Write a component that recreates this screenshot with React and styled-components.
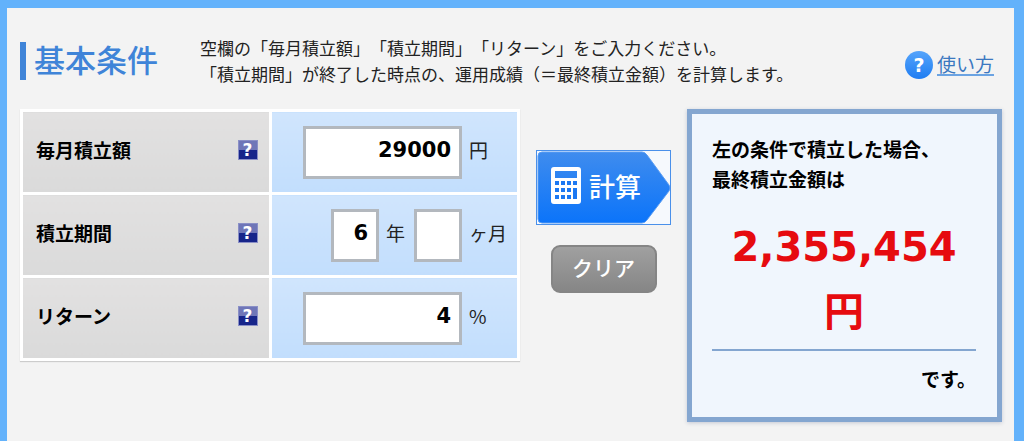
import React, { useState } from 'react';
import styled, { createGlobalStyle, ThemeProvider } from 'styled-components';

const theme = {
	brand: '#63b2fb',
	heading: '#3f84d8',
	line: '#84a6d0',
	danger: '#e60b0f',
	text: '#222',
	jp: '"Noto Sans CJK JP", sans-serif',
	digits: '"DejaVu Sans", "Noto Sans CJK JP", sans-serif',
};

const GlobalStyle = createGlobalStyle`
	*,
	*::before,
	*::after {
		box-sizing: border-box;
	}

	body {
		margin: 0;
		background: ${theme.brand};
		color: ${theme.text};
		font-family: ${theme.jp};
		text-spacing-trim: space-all;
	}

	button,
	input {
		font-family: inherit;
		text-spacing-trim: inherit;
	}
`;

const Page = styled.div`
	display: flex;
	min-height: 100vh;
	padding: 8px 10px 0 7px;
`;

const Panel = styled.main`
	flex: 1;
	min-width: 0;
	padding: 27px 12px 20px 13px;
	background: #f3f3f3;
`;

const Header = styled.header`
	display: flex;
	align-items: center;
	gap: 42px;
	margin-bottom: 22px;
`;

const Title = styled.h1`
	margin: 0;
	padding: 0 0 4px 8px;
	border-left: 6px solid ${props => props.theme.heading};
	color: ${props => props.theme.heading};
	font-size: 31px;
	font-weight: 500;
	line-height: 34px;
	white-space: nowrap;
`;

const Lead = styled.p`
	flex: 1;
	margin: 0;
	font-size: 17px;
	line-height: 26px;
`;

const HelpLink = styled.a`
	display: flex;
	align-items: center;
	gap: 4px;
	padding: 8px 8px 0 0;
	color: #3b78c0;
	font-size: 19px;
	line-height: 28px;
	text-decoration: none;
`;

const HelpBadge = styled.span`
	width: 28px;
	border-radius: 50%;
	background: linear-gradient(#55a4fb, #1f7df2);
	color: #fff;
	font-family: ${props => props.theme.digits};
	font-size: 19px;
	font-weight: 700;
	text-align: center;
`;

const HelpText = styled.span`
	line-height: 20px;
	border-bottom: 2px solid #6ba3e2;
`;

const Columns = styled.form`
	display: grid;
	grid-template-columns: minmax(0, 1fr) 135px 315px;
	gap: 16px;
	align-items: start;
`;

const Conditions = styled.table`
	width: 100%;
	border-collapse: collapse;
	table-layout: fixed;
	box-shadow: 0 1px 1px #ccc;
`;

const cell = `
	height: 83px;
	padding: 0;
	border: 3px solid #fff;
`;

const LabelCell = styled.th`
	${cell}
	background: linear-gradient(#e2e1e1, #dadada);
	text-align: left;
`;

const ValueCell = styled.td`
	${cell}
	background: linear-gradient(#d0e5fd, #c2defd);
`;

const LabelRow = styled.div`
	display: flex;
	align-items: center;
	justify-content: space-between;
	padding: 0 11px 4px 13px;
	color: #000;
	font-size: 19px;
	line-height: 30px;
`;

const HintButton = styled.button`
	width: 20px;
	height: 20px;
	padding: 0;
	border: 1px solid #8a8fc6;
	background: linear-gradient(#6f76b8 50%, #17258a 50%);
	color: #fff;
	font-family: ${props => props.theme.digits};
	font-size: 17px;
	font-weight: 700;
	line-height: 18px;
`;

const Fields = styled.div`
	display: flex;
	align-items: center;
	justify-content: flex-end;
`;

const NumberInput = styled.input`
	width: ${props => (props.$short ? 48 : 159)}px;
	height: 53px;
	padding: 0 8px 4px;
	border: 3px solid #b3b8be;
	border-radius: 0;
	background: #fff;
	color: #000;
	font-family: ${props => props.theme.digits};
	font-size: 21px;
	font-weight: 700;
	text-align: right;
	outline: none;
`;

const Unit = styled.span`
	width: ${props => (props.$inner ? 35 : 55)}px;
	padding: 0 0 4px 7px;
	font-size: 19px;
	line-height: 30px;
	white-space: nowrap;
`;

const Actions = styled.div`
	display: flex;
	flex-direction: column;
	align-items: center;
	gap: 20px;
	padding-top: 41px;
`;

const CalcButton = styled.button`
	position: relative;
	display: flex;
	align-items: center;
	gap: 8px;
	width: 135px;
	height: 75px;
	padding: 0 0 4px 14px;
	border: 1px solid #4a90ea;
	background: transparent;
	color: #fff;
	font-size: 26px;
	font-weight: 500;
`;

const Arrow = styled.svg`
	position: absolute;
	inset: 0;
	width: 100%;
	height: 100%;
`;

const CalcIcon = styled.svg`
	position: relative;
	width: 30px;
	height: 37px;
`;

const CalcText = styled.span`
	position: relative;
`;

const ClearButton = styled.button`
	width: 106px;
	height: 48px;
	padding: 0 0 4px;
	border: 2px solid #858585;
	border-radius: 9px;
	background: linear-gradient(#a0a0a0, #868686);
	color: #fff;
	font-size: 21px;
	font-weight: 500;
`;

const Result = styled.section`
	padding: 20px 21px 23px 20px;
	border: 5px solid ${props => props.theme.line};
	background: #f0f6fd;
	box-shadow: 0 1px 4px #c4c8d4;
	color: #000;
	font-size: 19px;
	font-weight: 700;
	line-height: 30px;
`;

const ResultText = styled.p`
	margin: 0;
	text-align: ${props => props.$align || 'left'};
	white-space: nowrap;
`;

const Amount = styled.output`
	display: block;
	margin: 19px 0 13px;
	border-bottom: 2px solid ${props => props.theme.line};
	color: ${props => props.theme.danger};
	font-family: ${props => props.theme.digits};
	font-size: 40px;
	line-height: 68px;
	text-align: center;
`;

const Yen = styled.span`
	display: inline-block;
	font-family: ${props => props.theme.jp};
	line-height: 56px;
	vertical-align: top;
`;

const KEYS = [0, 1, 2].flatMap(row => [0, 1, 2, 3].map(col => ({ row, col })));

const Calculator = () => (
	<CalcIcon viewBox="0 0 30 37" aria-hidden="true">
		<path
			fill="#fff"
			fillRule="evenodd"
			d="M3 0h24a3 3 0 0 1 3 3v31a3 3 0 0 1-3 3H3a3 3 0 0 1-3-3V3a3 3 0 0 1 3-3ZM4 4v7h22V4Z"
		/>
		{KEYS.filter(({ row, col }) => !(row === 2 && col === 3)).map(({ row, col }) => (
			<rect
				key={`${row}-${col}`}
				x={4 + col * 6}
				y={14 + row * 7}
				width="4"
				height={col === 3 && row === 1 ? 11 : 4}
				fill="#1c78f2"
			/>
		))}
	</CalcIcon>
);

const Row = ({ id, label, children }) => (
	<tr>
		<LabelCell scope="row">
			<LabelRow>
				<label htmlFor={id}>{label}</label>
				<HintButton type="button">?</HintButton>
			</LabelRow>
		</LabelCell>
		<ValueCell>
			<Fields>{children}</Fields>
		</ValueCell>
	</tr>
);

const App = () => {
	const [values, setValues] = useState({ monthly: '29000', years: '6', months: '', rate: '4' });

	const bind = name => ({
		id: name,
		name,
		value: values[name],
		onChange: event => setValues({ ...values, [name]: event.target.value }),
	});

	return (
		<ThemeProvider theme={theme}>
			<GlobalStyle />
			<Page>
				<Panel>
					<Header>
						<Title>基本条件</Title>
						<Lead>
							空欄の「毎月積立額」「積立期間」「リターン」をご入力ください。
							<br />
							「積立期間」が終了した時点の、運用成績（＝最終積立金額）を計算します。
						</Lead>
						<HelpLink href="#help">
							<HelpBadge>?</HelpBadge>
							<HelpText>使い方</HelpText>
						</HelpLink>
					</Header>
					<Columns onSubmit={event => event.preventDefault()}>
						<Conditions>
							<tbody>
								<Row id="monthly" label="毎月積立額">
									<NumberInput {...bind('monthly')} />
									<Unit>円</Unit>
								</Row>
								<Row id="years" label="積立期間">
									<NumberInput $short {...bind('years')} />
									<Unit as="label" htmlFor="years" $inner>
										年
									</Unit>
									<NumberInput $short {...bind('months')} />
									<Unit as="label" htmlFor="months">
										ヶ月
									</Unit>
								</Row>
								<Row id="rate" label="リターン">
									<NumberInput {...bind('rate')} />
									<Unit>%</Unit>
								</Row>
							</tbody>
						</Conditions>
						<Actions>
							<CalcButton type="submit">
								<Arrow viewBox="0 0 133 73" preserveAspectRatio="none" aria-hidden="true">
									<defs>
										<linearGradient id="arrow" x1="0" y1="0" x2="0" y2="1">
											<stop offset="0" stopColor="#3f8cee" />
											<stop offset="1" stopColor="#0b74fa" />
										</linearGradient>
									</defs>
									<path fill="#f6f9fd" d="M0 0h133v73H0Z" />
									<path
										fill="url(#arrow)"
										stroke="#5a9df3"
										d="M5 1h100q3 0 5 3l22 30q2 3 0 6l-22 29q-2 3-5 3H5q-4 0-4-4V5q0-4 4-4Z"
									/>
								</Arrow>
								<Calculator />
								<CalcText>計算</CalcText>
							</CalcButton>
							<ClearButton
								type="button"
								onClick={() => setValues({ monthly: '', years: '', months: '', rate: '' })}
							>
								クリア
							</ClearButton>
						</Actions>
						<Result>
							<ResultText>左の条件で積立した場合、</ResultText>
							<ResultText>最終積立金額は</ResultText>
							<Amount>
								2,355,454
								<Yen>円</Yen>
							</Amount>
							<ResultText $align="right">です。</ResultText>
						</Result>
					</Columns>
				</Panel>
			</Page>
		</ThemeProvider>
	);
};

export default App;
